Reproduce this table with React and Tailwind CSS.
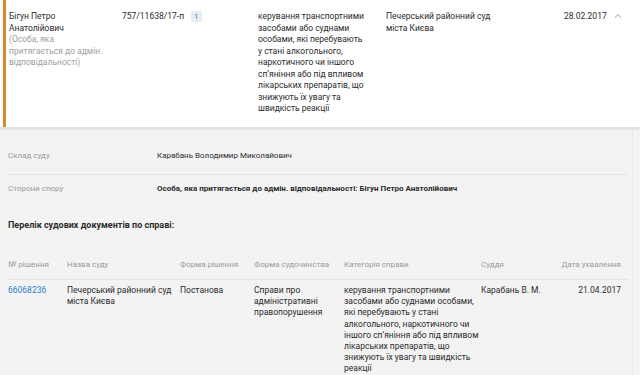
const categoryText =
  "керування транспортними засобами або суднами особами, які перебувають у стані алкогольного, наркотичного чи іншого сп’яніння або під впливом лікарських препаратів, що знижують їх увагу та швидкість реакції";

const cols = "grid grid-cols-[59px_113px_74px_90px_137px_1fr_auto] pr-[7px]";

const App = () => {
  return (
    <div className="w-[640px] h-[375px] overflow-hidden bg-[#f3f3f3] font-['Roboto',sans-serif] text-[#2b2b2b]">
      {/* top case row */}
      <div className="bg-white pl-[3px] shadow-[0_1px_2px_rgba(0,0,0,0.12)] border-b border-[#e2e2e2] text-[8.5px] leading-[11.5px]">
        <div className="flex border-l-[3px] border-[#d98a31] pl-[3px] pt-[11px] h-[127px]">
          <div className="w-[113px] pr-[17px]">
            <div>Бігун Петро Анатолійович</div>
            <div className="text-[#a0a0a0]">(Особа, яка притягається до адмін. відповідальності)</div>
          </div>
          <div className="w-[136px] flex items-start gap-[7px]">
            <span>757/11638/17-п</span>
            <span className="bg-[#e9eef5] text-[#4a7fb5] text-[8px] leading-[11px] px-[3px] rounded-[1px]">1</span>
          </div>
          <div className="w-[128px] pr-[19px]">{categoryText}</div>
          <div className="w-[178px] pr-[55px]">Печерський районний суд міста Києва</div>
          <div className="flex items-start gap-[7px]">
            <span>28.02.2017</span>
            <svg width="8" height="8" viewBox="0 0 8 8" className="mt-[1px]">
              <path d="M1 5.5 L4 2.5 L7 5.5" fill="none" stroke="#b9c6d3" strokeWidth="1.2" />
            </svg>
          </div>
        </div>
      </div>

      {/* details */}
      <div className="w-[633px] h-full border-r border-[#e9e9e9] pl-[8px] pr-[4px] pt-[22px]">
        <div className="flex text-[8px] leading-[11.5px] pb-[12px] border-b border-[#e4e4e4]">
          <div className="w-[149px] text-[#9a9a9a]">Склад суду</div>
          <div>Карабань Володимир Миколайович</div>
        </div>
        <div className="flex text-[8px] leading-[11.5px] pt-[8px]">
          <div className="w-[149px] text-[#9a9a9a]">Сторони спору</div>
          <div className="font-bold">Особа, яка притягається до адмін. відповідальності: Бігун Петро Анатолійович</div>
        </div>
        <div className="mt-[26px] text-[9px] leading-[11.5px] font-bold">Перелік судових документів по справі:</div>

        <div className={`${cols} mt-[27px] text-[8px] leading-[11.5px] text-[#9a9a9a] pb-[9px] border-b border-[#e4e4e4]`}>
          <div>№ рішення</div>
          <div>Назва суду</div>
          <div>Форма рішення</div>
          <div>Форма судочинства</div>
          <div>Категорія справи</div>
          <div>Суддя</div>
          <div className="text-right">Дата ухвалення</div>
        </div>
        <div className={`${cols} pt-[5px] text-[8.5px] leading-[11.2px]`}>
          <div className="text-[#2f7fc6]">66068236</div>
          <div className="pr-[8px]">Печерський районний суд міста Києва</div>
          <div>Постанова</div>
          <div className="pr-[2px]">Справи про адміністративні правопорушення</div>
          <div>{categoryText}</div>
          <div>Карабань В. М.</div>
          <div className="text-right">21.04.2017</div>
        </div>
      </div>
    </div>
  );
};

export default App;
